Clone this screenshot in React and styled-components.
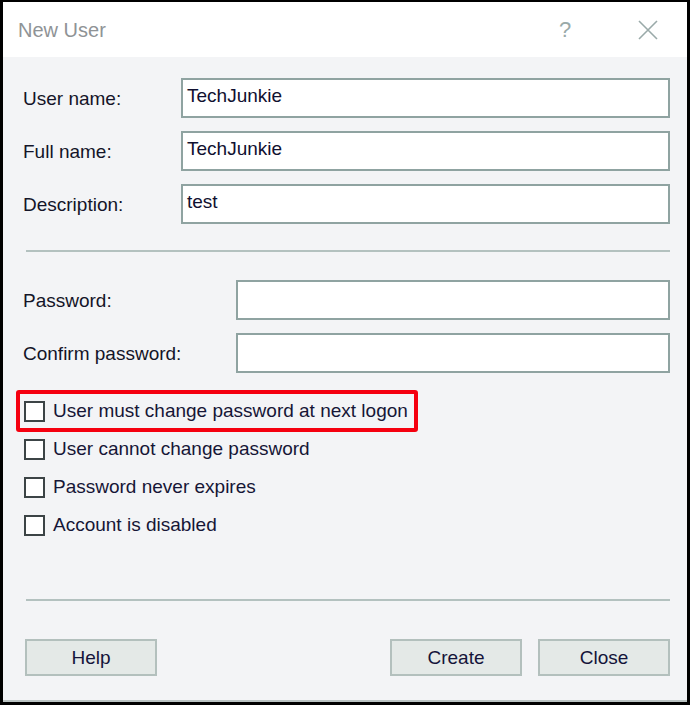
import React from 'react';
import styled, { createGlobalStyle } from 'styled-components';

const GlobalStyle = createGlobalStyle`
    html, body {
        margin: 0;
        padding: 0;
        background: #000;
    }
    body {
        font-family: "Liberation Sans", Arial, sans-serif;
    }
`

const Frame = styled.div`
    box-sizing: border-box;
    width: 690px;
    height: 705px;
    border: 3px solid #000;
    border-top-width: 2px;
    display: flex;
    flex-direction: column;
    background: #f3f4f6;
`
const TitleBar = styled.div`
    height: 55px;
    background: #fff;
    display: flex;
    align-items: center;
    padding: 0 9px 0 15px;
    flex-shrink: 0;
`
const Title = styled.div`
    flex: 1;
    font-size: 20px;
    color: #8f9396;
    margin-top: 1px;
`
const TitleButton = styled.div`
    width: 60px;
    height: 100%;
    display: flex;
    align-items: center;
    justify-content: center;
    color: #9aaaa9;
    font-size: 22px;
    margin-left: ${p => p.gap || 0}px;
`
const Body = styled.div`
    flex: 1;
    display: flex;
    flex-direction: column;
    padding: 21px 17px 0 20px;
    border-bottom: 2px solid #b9c2c1;
`
const FieldRow = styled.div`
    display: flex;
    align-items: center;
    height: 40px;
    margin-bottom: ${p => p.mb}px;
`
const Label = styled.div`
    width: ${p => p.w}px;
    flex-shrink: 0;
    font-size: 19px;
    color: #141428;
    padding-top: 2px;
`
const TextBox = styled.div`
    flex: 1;
    box-sizing: border-box;
    height: 40px;
    background: #fff;
    border: 2px solid #8fa3a1;
    font-size: 19px;
    color: #101030;
    padding: 0 0 4px 4px;
    display: flex;
    align-items: center;
`
const Separator = styled.div`
    height: 2px;
    background: #b3c1bf;
    margin: ${p => p.m};
`
const CheckList = styled.div`
    display: flex;
    flex-direction: column;
    margin-left: -7px;
`
const CheckRow = styled.div`
    display: flex;
    align-items: center;
    gap: 8px;
    box-sizing: border-box;
    width: ${p => (p.$hl ? '402px' : 'auto')};
    border: 4px solid ${p => (p.$hl ? '#f5000f' : 'transparent')};
    border-radius: 3px;
    padding-left: 4px;
    margin-bottom: ${p => (p.$hl ? '-2px' : '0')};
    height: ${p => (p.$hl ? '42px' : '38px')};
`
const Box = styled.div`
    width: 21px;
    height: 21px;
    box-sizing: border-box;
    border: 2px solid #3c4446;
    background: #fff;
    flex-shrink: 0;
`
const CheckText = styled.span`
    font-size: 19px;
    color: #161636;
    white-space: nowrap;
`
const Spacer = styled.div`
    flex: 1;
`
const ButtonBar = styled.div`
    display: flex;
    align-items: center;
    padding: 38px 0 24px 2px;
`
const Button = styled.div`
    width: 132px;
    height: 37px;
    box-sizing: border-box;
    background: #e4e9e7;
    border: 2px solid #b3c0bd;
    display: flex;
    align-items: center;
    justify-content: center;
    font-size: 19px;
    color: #14143a;
    margin-left: ${p => p.ml || 0}px;
`

const checks = [
    'User must change password at next logon',
    'User cannot change password',
    'Password never expires',
    'Account is disabled',
]

export default function App() {
    return (
        <>
            <GlobalStyle />
            <Frame>
                <TitleBar>
                    <Title>New User</Title>
                    <TitleButton>?</TitleButton>
                    <TitleButton gap={23}>
                        <svg width="20" height="20" viewBox="0 0 20 20">
                            <path d="M1 1 L19 19 M19 1 L1 19" stroke="#9aaaa9" strokeWidth="1.6" fill="none" />
                        </svg>
                    </TitleButton>
                </TitleBar>
                <Body>
                    <FieldRow mb={13}>
                        <Label w={158}>User name:</Label>
                        <TextBox>TechJunkie</TextBox>
                    </FieldRow>
                    <FieldRow mb={13}>
                        <Label w={158}>Full name:</Label>
                        <TextBox>TechJunkie</TextBox>
                    </FieldRow>
                    <FieldRow mb={0}>
                        <Label w={158}>Description:</Label>
                        <TextBox>test</TextBox>
                    </FieldRow>
                    <Separator m="26px 0 28px 3px" />
                    <FieldRow mb={13}>
                        <Label w={213}>Password:</Label>
                        <TextBox />
                    </FieldRow>
                    <FieldRow mb={17}>
                        <Label w={213}>Confirm password:</Label>
                        <TextBox />
                    </FieldRow>
                    <CheckList>
                        {checks.map((text, i) => (
                            <CheckRow key={text} $hl={i === 0}>
                                <Box />
                                <CheckText>{text}</CheckText>
                            </CheckRow>
                        ))}
                    </CheckList>
                    <Spacer />
                    <Separator m="0 0 0 3px" />
                    <ButtonBar>
                        <Button>Help</Button>
                        <Button ml={233}>Create</Button>
                        <Button ml={16}>Close</Button>
                    </ButtonBar>
                </Body>
            </Frame>
        </>
    );
}
